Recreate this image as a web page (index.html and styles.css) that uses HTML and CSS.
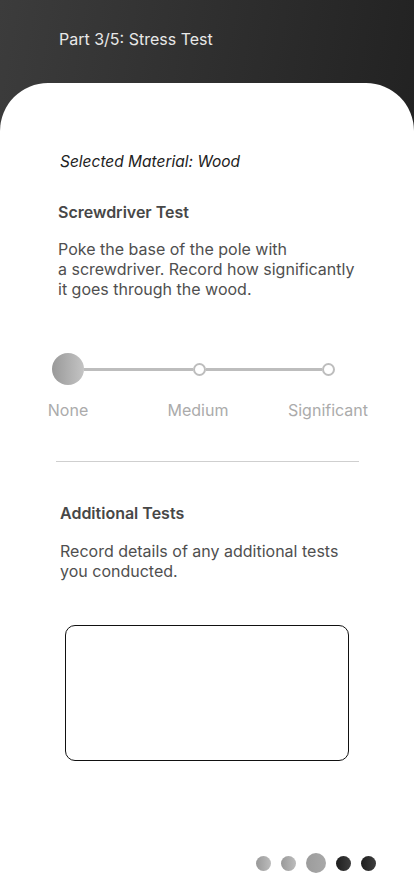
FILE: index.html
```html
<!DOCTYPE html>
<html lang="en">
<head>
    <meta charset="UTF-8">
    <meta name="viewport" content="width=device-width, initial-scale=1.0">
    <title>Stress Test</title>
    <link rel="stylesheet" href="styles.css">
</head>
<body>
    <div id="screen">
        <div class="header">
            <h1 class="header-title">Part 3/5: Stress Test</h1>
        </div>

        <div class="card">
            <p class="material">Selected Material: Wood</p>

            <h2 class="section-title">Screwdriver Test</h2>
            <p class="section-text">Poke the base of the pole with<br>a screwdriver. Record how significantly<br>it goes through the wood.</p>

            <div class="slider">
                <span class="knob"></span>
                <span class="track track-1"></span>
                <span class="stop"></span>
                <span class="track track-2"></span>
                <span class="stop"></span>
            </div>
            <div class="slider-labels">
                <span>None</span>
                <span>Medium</span>
                <span>Significant</span>
            </div>

            <hr class="divider">

            <h2 class="section-title second">Additional Tests</h2>
            <p class="section-text second">Record details of any additional tests<br>you conducted.</p>

            <textarea class="notes"></textarea>

            <div class="pager">
                <span class="dot light"></span>
                <span class="dot light"></span>
                <span class="dot current"></span>
                <span class="dot dark"></span>
                <span class="dot dark"></span>
            </div>
        </div>
    </div>
</body>
</html>
```

FILE: styles.css
```css
body {
    margin: 0;
    font-family: 'Inter', 'Noto Sans', sans-serif;
    background-color: #fff;
}

#screen {
    width: 414px;
    height: 896px;
    overflow: hidden;
    background: linear-gradient(100deg, #3c3c3c 0%, #1a1a1a 100%);
}

.header {
    height: 83px;
    padding-left: 59px;
    box-sizing: border-box;
    padding-top: 29px;
}

.header-title {
    margin: 0;
    font-size: 16px;
    font-weight: 400;
    line-height: 20px;
    color: #e8e8e8;
}

.card {
    background-color: #fff;
    border-radius: 48px 48px 0 0;
    height: 813px;
    overflow: hidden;
}

.material {
    margin: 69px 0 0 60px;
    font-size: 15.5px;
    font-style: italic;
    line-height: 20px;
    color: #222;
}

.section-title {
    margin: 30px 0 0 58px;
    font-size: 16px;
    font-weight: 600;
    line-height: 20px;
    color: #474747;
}

.section-text {
    margin: 17px 0 0 58px;
    font-size: 16px;
    line-height: 20px;
    color: #4f4f4f;
}

.section-title.second {
    margin-top: 41px;
    margin-left: 60px;
}

.section-text.second {
    margin-top: 18px;
    margin-left: 60px;
}

.slider {
    display: flex;
    align-items: center;
    margin-top: 54px;
    padding-left: 52px;
    height: 32px;
}

.knob {
    width: 32px;
    height: 32px;
    border-radius: 50%;
    background: linear-gradient(90deg, #999 0%, #c4c4c4 100%);
}

.track {
    height: 3px;
    background-color: #bdbdbd;
}

.track-1 {
    width: 109px;
}

.track-2 {
    width: 116px;
}

.stop {
    width: 13px;
    height: 13px;
    box-sizing: border-box;
    border: 2.5px solid #bdbdbd;
    border-radius: 50%;
    background-color: #fff;
}

.slider-labels {
    display: grid;
    grid-template-columns: repeat(3, 130px);
    margin: 15px 0 0 3px;
    font-size: 16px;
    line-height: 20px;
    color: #ababab;
    text-align: center;
}

.divider {
    margin: 41px 0 0 56px;
    width: 303px;
    border: 0;
    border-top: 1px solid #cfcfcf;
}

.notes {
    display: block;
    margin: 44px 0 0 65px;
    width: 284px;
    height: 136px;
    box-sizing: border-box;
    border: 1.5px solid #111;
    border-radius: 10px;
    resize: none;
    outline: none;
    font-family: inherit;
}

.pager {
    display: flex;
    align-items: center;
    justify-content: flex-end;
    gap: 10px;
    height: 20px;
    margin-top: 92px;
    padding-right: 38px;
}

.dot {
    width: 15px;
    height: 15px;
    border-radius: 50%;
}

.dot.light {
    background: linear-gradient(90deg, #999 0%, #bcbcbc 100%);
}

.dot.current {
    width: 20px;
    height: 20px;
    background: linear-gradient(90deg, #9c9c9c 0%, #a8a8a8 100%);
}

.dot.dark {
    background: linear-gradient(90deg, #1e1e1e 0%, #3e3e3e 100%);
}
```
